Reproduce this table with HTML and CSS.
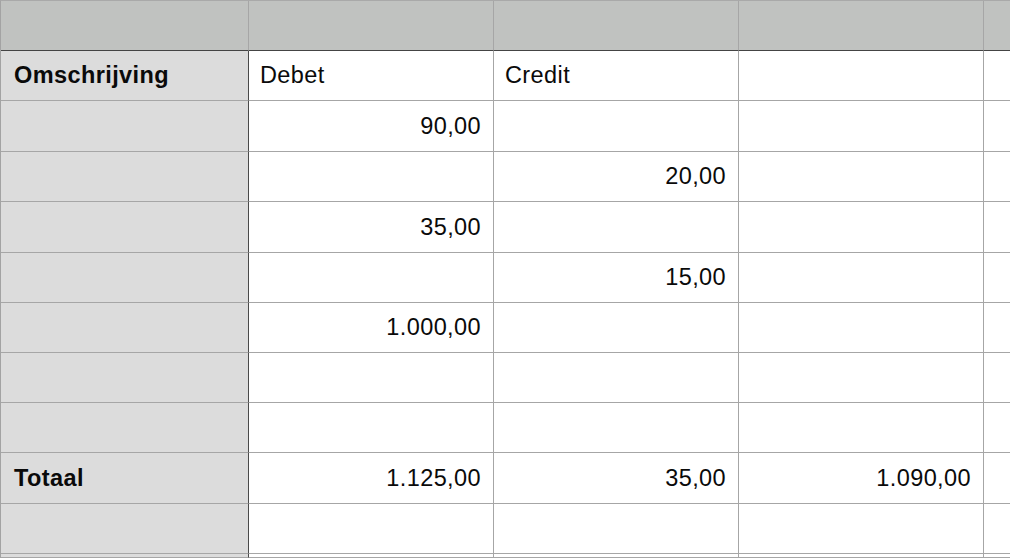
FILE: index.html
```html
<!DOCTYPE html>
<html lang="nl">
<head>
<meta charset="utf-8">
<title>Omschrijving</title>
<link rel="stylesheet" href="styles.css">
</head>
<body>
<div class="sheet">
  <div class="cell head first"></div>
  <div class="cell head"></div>
  <div class="cell head"></div>
  <div class="cell head"></div>
  <div class="cell head"></div>

  <div class="cell label">Omschrijving</div>
  <div class="cell">Debet</div>
  <div class="cell">Credit</div>
  <div class="cell"></div>
  <div class="cell"></div>

  <div class="cell label"></div>
  <div class="cell num">90,00</div>
  <div class="cell num"></div>
  <div class="cell"></div>
  <div class="cell"></div>

  <div class="cell label"></div>
  <div class="cell num"></div>
  <div class="cell num">20,00</div>
  <div class="cell"></div>
  <div class="cell"></div>

  <div class="cell label"></div>
  <div class="cell num">35,00</div>
  <div class="cell num"></div>
  <div class="cell"></div>
  <div class="cell"></div>

  <div class="cell label"></div>
  <div class="cell num"></div>
  <div class="cell num">15,00</div>
  <div class="cell"></div>
  <div class="cell"></div>

  <div class="cell label"></div>
  <div class="cell num">1.000,00</div>
  <div class="cell num"></div>
  <div class="cell"></div>
  <div class="cell"></div>

  <div class="cell label"></div>
  <div class="cell"></div>
  <div class="cell"></div>
  <div class="cell"></div>
  <div class="cell"></div>

  <div class="cell label"></div>
  <div class="cell"></div>
  <div class="cell"></div>
  <div class="cell"></div>
  <div class="cell"></div>

  <div class="cell label">Totaal</div>
  <div class="cell num">1.125,00</div>
  <div class="cell num">35,00</div>
  <div class="cell num">1.090,00</div>
  <div class="cell"></div>

  <div class="cell label"></div>
  <div class="cell"></div>
  <div class="cell"></div>
  <div class="cell"></div>
  <div class="cell"></div>

  <div class="cell label"></div>
  <div class="cell"></div>
  <div class="cell"></div>
  <div class="cell"></div>
  <div class="cell"></div>
</div>
</body>
</html>
```

FILE: styles.css
```css
html, body {
  margin: 0;
  padding: 0;
  background: #ffffff;
}

.sheet {
  box-sizing: border-box;
  display: grid;
  grid-template-columns: 248px 245px 245px 245px 1fr;
  grid-template-rows: 50px 50px 51px 50px 51px 50px 50px 50px 50px 51px 50px 4px;
  width: 1010px;
  height: 558px;
  overflow: hidden;
  border-top: 1px solid #a9a9a9;
  border-left: 1px solid #a3a3a3;
  font-family: "Liberation Sans", Arial, Helvetica, sans-serif;
  font-size: 23.5px;
  letter-spacing: 0.4px;
  color: #0a0a0a;
}

.cell {
  box-sizing: border-box;
  display: flex;
  align-items: center;
  min-width: 0;
  overflow: hidden;
  padding: 0 12px 0 11px;
  border-right: 1px solid #a6a6a6;
  border-bottom: 1px solid #a6a6a6;
  background: #ffffff;
  white-space: nowrap;
}

.cell:nth-child(5n) {
  border-right: none;
}

.head {
  background: #c0c2c0;
  border-bottom-color: #444444;
}

.label {
  background: #dcdcdc;
  border-right-color: #4a4a4a;
  font-weight: bold;
  padding-left: 13px;
}

.head.first {
  border-right-color: #a6a6a6;
}

.num {
  justify-content: flex-end;
  padding-right: 12px;
}
```
